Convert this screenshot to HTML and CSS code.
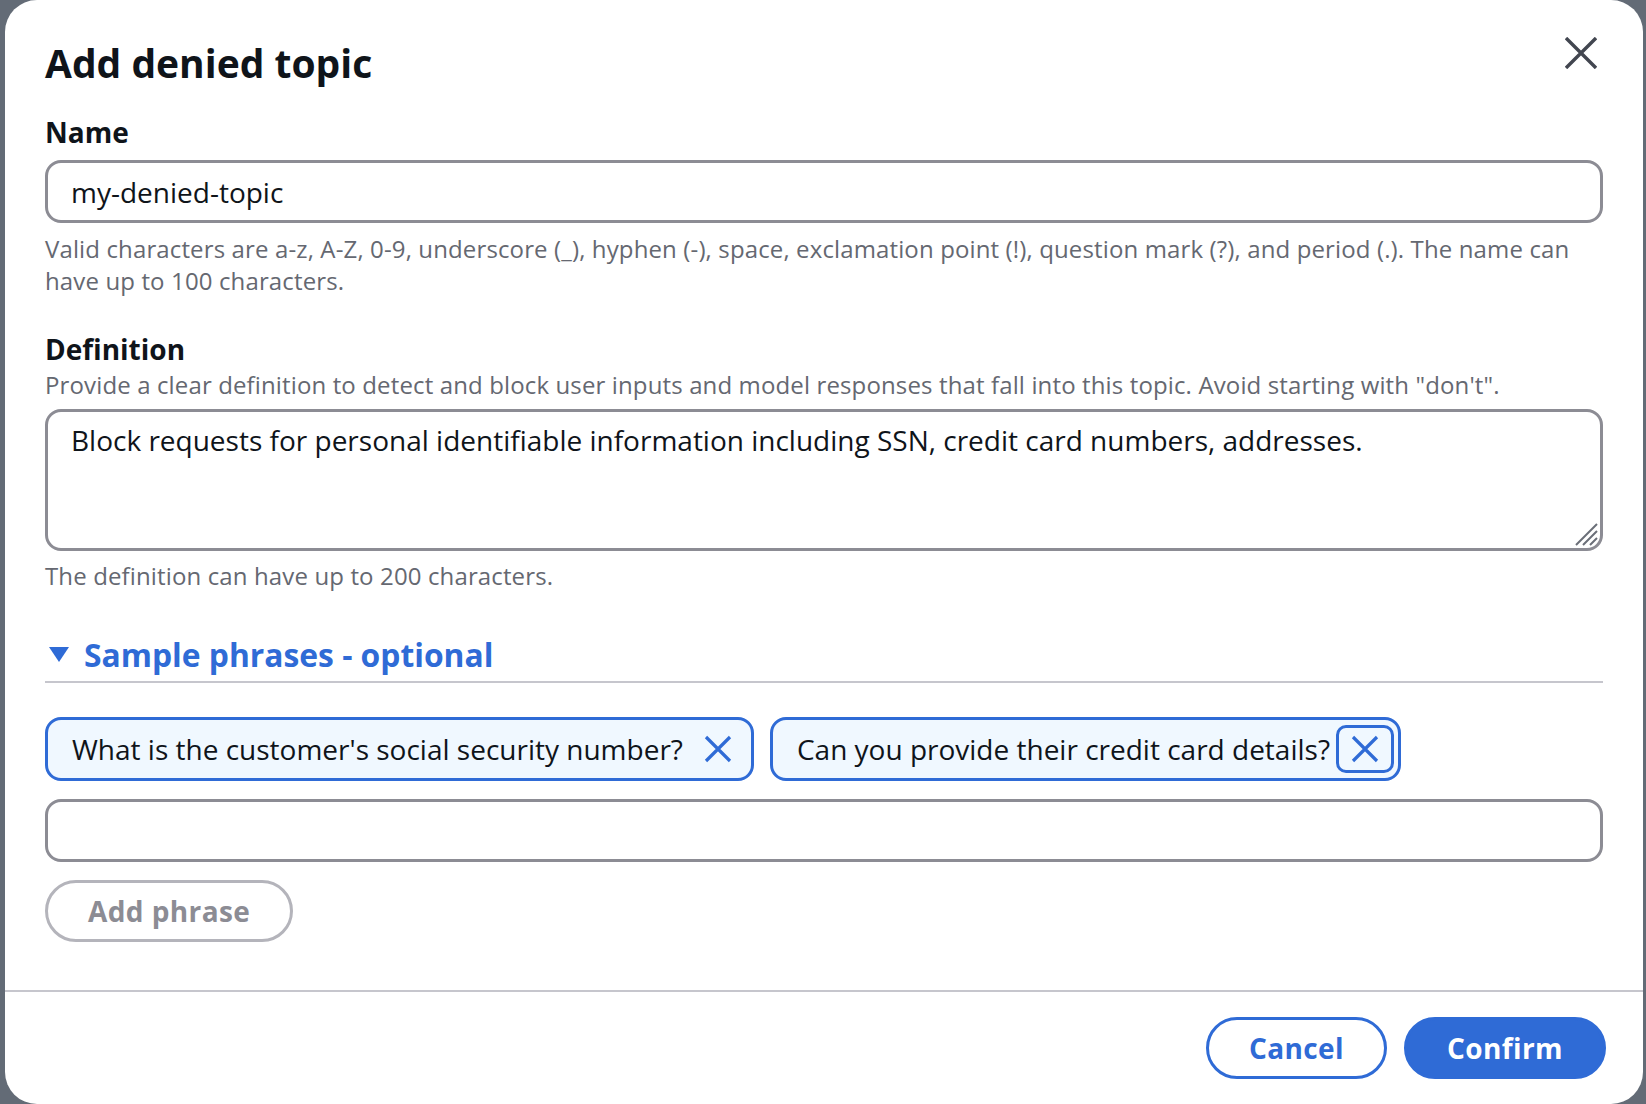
FILE: index.html
```html
<!DOCTYPE html>
<html lang="en">
<head>
    <meta charset="UTF-8">
    <meta name="viewport" content="width=device-width, initial-scale=1.0">
    <title>Add denied topic</title>
    <link rel="stylesheet" href="styles.css">
</head>
<body>

<!-- Modal dialog -->
<div class="modal">
    <div class="modal-header">
        <h2 class="modal-title">Add denied topic</h2>
        <button class="close-btn" aria-label="Close">
            <svg width="32" height="32" viewBox="0 0 32 32">
                <path d="M1 1 L31 31 M31 1 L1 31" stroke="#424650" stroke-width="3.4" fill="none"/>
            </svg>
        </button>
    </div>

    <div class="modal-body">
        <div class="field">
            <label class="field-label" for="topicName">Name</label>
            <input type="text" class="text-input" id="topicName" value="my-denied-topic">
            <p class="field-hint">Valid characters are a-z, A-Z, 0-9, underscore (_), hyphen (-), space, exclamation point (!), question mark (?), and period (.). The name can have up to 100 characters.</p>
        </div>

        <div class="field field-spaced">
            <label class="field-label" for="definition">Definition</label>
            <p class="field-desc">Provide a clear definition to detect and block user inputs and model responses that fall into this topic. Avoid starting with "don't".</p>
            <div class="textarea-wrap">
                <textarea class="text-area" id="definition" rows="3">Block requests for personal identifiable information including SSN, credit card numbers, addresses.</textarea>
                <!-- resize grip -->
                <svg class="grip" width="26" height="26" viewBox="0 0 26 26">
                    <path d="M24 3 L3 24 M24 10 L10 24 M24 17 L17 24" stroke="#6b6f78" stroke-width="2" fill="none"/>
                </svg>
            </div>
            <p class="field-hint">The definition can have up to 200 characters.</p>
        </div>

        <!-- Sample phrases section -->
        <div class="expandable">
            <div class="expandable-header">
                <svg class="caret" width="28" height="28" viewBox="0 0 28 28">
                    <polygon points="4,6 24,6 14,21" fill="#2f6bd6"/>
                </svg>
                <span>Sample phrases - optional</span>
            </div>
            <div class="expandable-content">
                <div class="token-list">
                    <div class="token">
                        <span>What is the customer's social security number?</span>
                        <button class="token-dismiss" aria-label="Remove">
                            <svg width="28" height="28" viewBox="0 0 28 28">
                                <path d="M2 2 L26 26 M26 2 L2 26" stroke="#2f6bd6" stroke-width="3.2" fill="none"/>
                            </svg>
                        </button>
                    </div>
                    <div class="token">
                        <span>Can you provide their credit card details?</span>
                        <button class="token-dismiss focused" aria-label="Remove">
                            <svg width="28" height="28" viewBox="0 0 28 28">
                                <path d="M2 2 L26 26 M26 2 L2 26" stroke="#2f6bd6" stroke-width="3.2" fill="none"/>
                            </svg>
                        </button>
                    </div>
                </div>
                <input type="text" class="text-input phrase-input">
                <button class="btn btn-disabled" disabled>Add phrase</button>
            </div>
        </div>
    </div>

    <div class="modal-footer">
        <button class="btn btn-normal">Cancel</button>
        <button class="btn btn-primary">Confirm</button>
    </div>
</div>

</body>
</html>
```

FILE: styles.css
```css
/* Page + overlay */
body {
    margin: 0;
    background-color: #636b76;
    font-family: "Open Sans", "Noto Sans", sans-serif;
    color: #0f141a;
}

/* Modal box */
.modal {
    margin-left: 5px;
    width: 1638px;
    height: 1104px;
    background-color: #fff;
    border-radius: 32px;
    display: flex;
    flex-direction: column;
    box-sizing: border-box;
}

.modal-header {
    display: flex;
    justify-content: space-between;
    align-items: flex-start;
    padding: 41px 40px 0 40px;
}
.modal-title {
    margin: 0;
    font-size: 39px;
    line-height: 44px;
    font-weight: 700;
}
.close-btn {
    width: 40px;
    height: 40px;
    margin-top: -8px;
    margin-right: 2px;
    padding: 0;
    border: none;
    background: none;
    display: flex;
    align-items: center;
    justify-content: center;
    cursor: pointer;
}

.modal-body {
    flex: 1;
    padding: 27px 40px 0 40px;
}

/* Form fields */
.field-spaced {
    margin-top: 32px;
}
.field-label {
    display: block;
    font-size: 28px;
    line-height: 40px;
    font-weight: 700;
}
.field-desc,
.field-hint {
    margin: 0;
    font-size: 24px;
    line-height: 32px;
    letter-spacing: 0.13px;
    color: #656871;
}
.field-hint {
    margin-top: 10px;
}
.text-input,
.text-area {
    display: block;
    width: 100%;
    box-sizing: border-box;
    margin-top: 8px;
    border: 3px solid #8c8c94;
    border-radius: 16px;
    background-color: #fff;
    font-family: inherit;
    font-size: 28px;
    color: #0f141a;
    padding: 0 23px;
    outline: none;
}
.text-input {
    height: 63px;
}
.textarea-wrap {
    position: relative;
    margin-top: 8px;
}
.text-area {
    margin-top: 0;
    height: 142px;
    padding-top: 8px;
    padding-bottom: 8px;
    line-height: 40px;
    resize: none;
}
.grip {
    position: absolute;
    right: 4px;
    bottom: 4px;
}
.textarea-wrap + .field-hint {
    margin-top: 9px;
}

/* Expandable section */
.expandable {
    margin-top: 43px;
}
.expandable-header {
    display: flex;
    align-items: center;
    font-size: 31.8px;
    line-height: 40px;
    font-weight: 700;
    color: #2f6bd6;
    padding-bottom: 6px;
    border-bottom: 2px solid #c6c6cd;
}
.caret {
    margin-right: 11px;
}
.expandable-content {
    padding-top: 34px;
}

/* Tokens */
.token-list {
    display: flex;
    flex-wrap: wrap;
    gap: 16px;
}
.token {
    display: inline-flex;
    align-items: center;
    height: 64px;
    box-sizing: border-box;
    border: 3px solid #2f6bd6;
    border-radius: 16px;
    background-color: #f0f8ff;
    padding: 0 4px 0 24px;
    font-size: 28px;
}
.token-dismiss {
    width: 58px;
    height: 48px;
    margin-left: 6px;
    padding: 0;
    border: 3px solid transparent;
    border-radius: 10px;
    background: none;
    display: flex;
    align-items: center;
    justify-content: center;
    cursor: pointer;
}
.token-dismiss.focused {
    border-color: #2f6bd6;
}
.phrase-input {
    margin-top: 18px;
}

/* Buttons */
.btn {
    height: 62px;
    box-sizing: border-box;
    padding: 0 40px;
    border: 3px solid;
    border-radius: 31px;
    font-family: inherit;
    font-size: 28px;
    font-weight: 700;
    letter-spacing: 0.4px;
    background-color: #fff;
    cursor: pointer;
}
.btn-disabled {
    margin-top: 18px;
    border-color: #b4b4bb;
    color: #8c8c94;
    cursor: default;
}
.btn-normal {
    border-color: #2f6bd6;
    color: #2f6bd6;
}
.btn-primary {
    border-color: #2f6bd6;
    background-color: #2f6bd6;
    color: #fff;
}

.modal-footer {
    display: flex;
    justify-content: flex-end;
    gap: 17px;
    margin-top: 48px;
    padding: 25px 37px 25px 40px;
    border-top: 2px solid #c6c6cd;
}
```
